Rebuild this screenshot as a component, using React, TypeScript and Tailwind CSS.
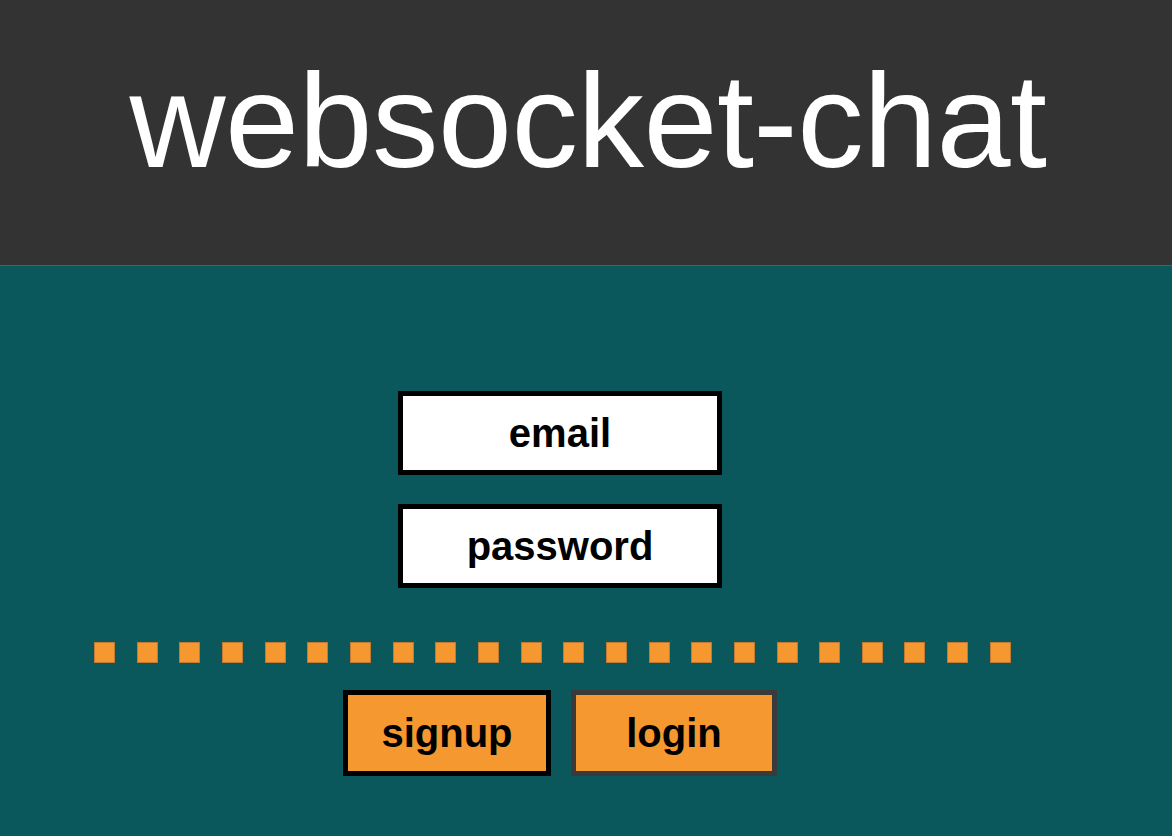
import React from 'react';

const DOTS = Array.from({ length: 22 }, (_, i) => i);

export default function App() {
  return (
    <div className="w-[1172px] h-[836px] flex flex-col bg-[#0b585c] font-['Liberation_Sans',Arial,sans-serif] overflow-hidden">
      <header className="h-[266px] shrink-0 bg-[#333333] border-b border-[#5a5a5a] flex items-center justify-center pb-[22px] pl-[4px]">
        <h1 className="text-white text-[133px] leading-none font-normal tracking-[-0.5px]">websocket-chat</h1>
      </header>

      <main className="flex-1 flex flex-col items-center pt-[125px] pr-[52px]">
        <input
          type="text"
          placeholder="email"
          className="w-[324px] h-[84px] bg-white border-[5px] border-black text-center text-[40px] font-bold text-black placeholder:text-black outline-none"
        />
        <input
          type="password"
          placeholder="password"
          className="mt-[29px] w-[324px] h-[84px] bg-white border-[5px] border-black text-center text-[40px] font-bold text-black placeholder:text-black outline-none"
        />

        <div className="self-start ml-[94px] mt-[54px] flex gap-[21.67px]">
          {DOTS.map((i) => (
            <div key={i} className="w-[21px] h-[21px] bg-[#f4982f] border border-[#c27a33]" />
          ))}
        </div>

        <div className="mt-[27px] flex gap-[20px]">
          <button className="w-[208px] h-[86px] bg-[#f4982f] border-[5px] border-black text-[40px] font-bold text-black">
            signup
          </button>
          <button className="w-[206px] h-[86px] bg-[#f4982f] border-[5px] border-[#3a3a3a] text-[40px] font-bold text-black">
            login
          </button>
        </div>
      </main>
    </div>
  );
}
